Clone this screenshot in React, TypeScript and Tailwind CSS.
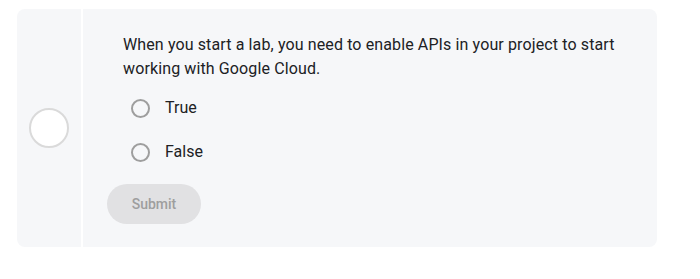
import React from "react";

const options = ["True", "False"];

export default function App() {
  return (
    <div className="h-[279px] w-[700px] bg-white pl-[17px] pt-[9px] font-['Roboto',sans-serif]">
      <div className="flex h-[238px] w-[640px] overflow-hidden rounded-lg bg-[#f6f7f9]">
        {/* Status column */}
        <div className="flex w-[66px] items-center justify-center border-r-2 border-white">
          <div className="h-[40px] w-[40px] rounded-full border-2 border-[#dadada] bg-white" />
        </div>

        {/* Question */}
        <div className="flex-1 pl-[24px] pt-[24px]">
          <p className="ml-[16px] w-[500px] text-[16px] leading-[24px] tracking-[0.12px] text-[#202124]">
            When you start a lab, you need to enable APIs in your project to start working with
            Google Cloud.
          </p>
          <div className="ml-[24px] mt-[5px] flex flex-col">
            {options.map((opt) => (
              <label key={opt} className="flex h-[44px] items-center">
                <span className="h-[19px] w-[19px] rounded-full border-2 border-[#9e9e9e]" />
                <span className="ml-[15px] text-[16px] text-[#202124]">{opt}</span>
              </label>
            ))}
          </div>
          <button
            disabled
            className="mt-[10px] h-[40px] w-[94px] rounded-full bg-[#e1e1e3] text-[14px] font-medium text-[#9e9e9e]"
          >
            Submit
          </button>
        </div>
      </div>
    </div>
  );
}
